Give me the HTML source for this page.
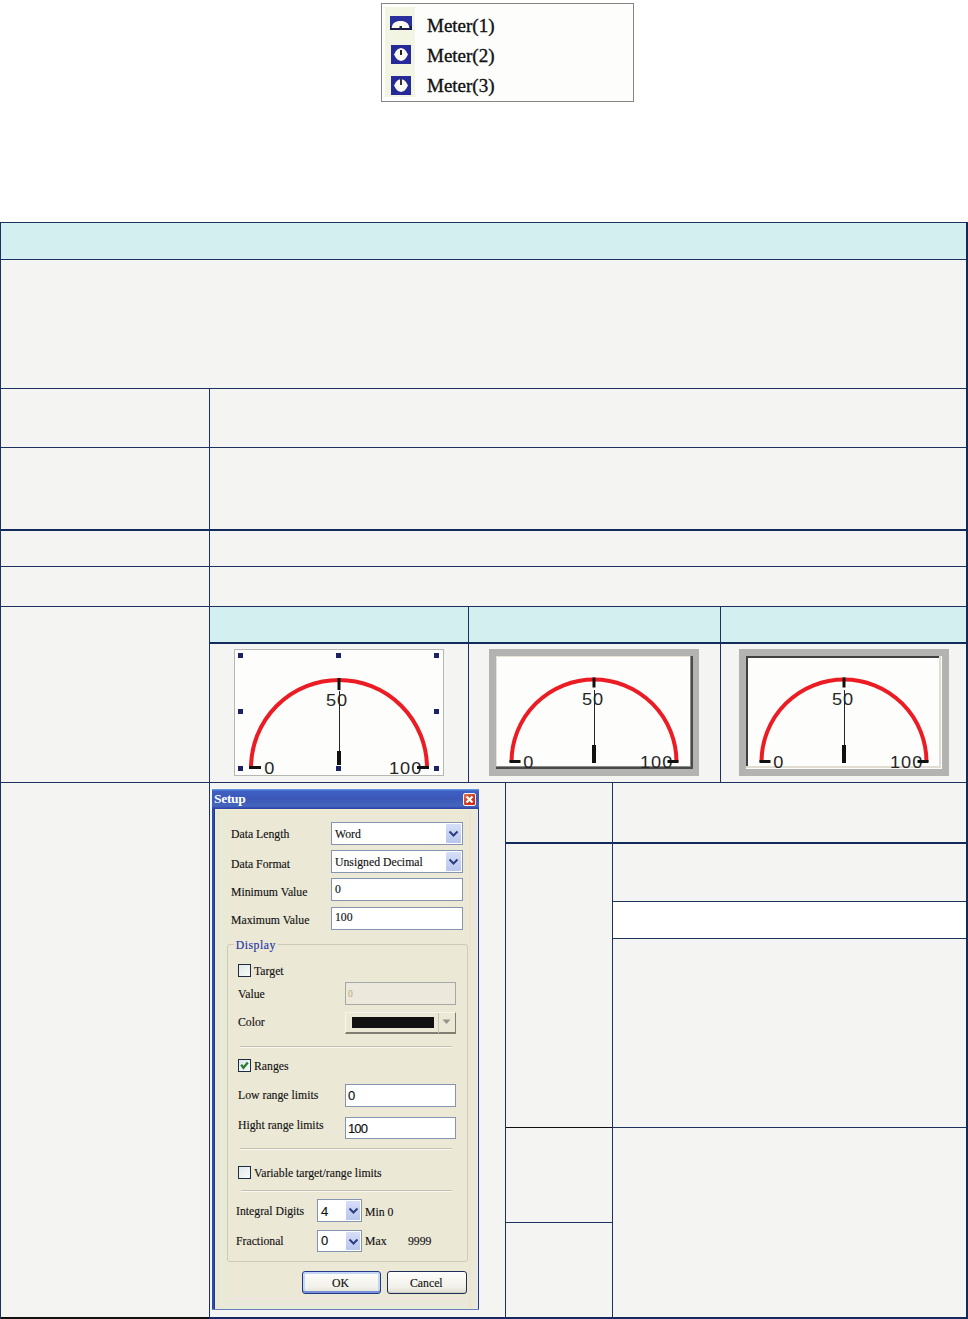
<!DOCTYPE html>
<html><head><meta charset="utf-8">
<style>
html,body{margin:0;padding:0;}
body{width:968px;height:1319px;background:#fff;position:relative;overflow:hidden;font-family:"Liberation Serif",serif;}
.a{position:absolute;}
.f{position:absolute;background:#f4f4f2;}
.h{position:absolute;background:#d3eff0;}
.L{position:absolute;background:#1d315e;}
.lbl{position:absolute;font-family:"Liberation Serif",serif;font-size:13.5px;color:#111;white-space:nowrap;line-height:12px;transform:scaleX(0.87);transform-origin:0 0;-webkit-text-stroke:0.15px currentColor;}
</style></head><body>

<!-- list box -->
<div class="a" style="left:381px;top:3px;width:251px;height:97px;border:1px solid #858583;background:#fdfdfc;"></div>
<div class="a" style="left:385px;top:7px;width:30px;height:90px;background:#f2f4e4;"></div>

<!-- table fills -->
<div class="f" style="left:0;top:222px;width:968px;height:1097px;"></div>
<div class="h" style="left:1px;top:223px;width:965px;height:36px;"></div>
<div class="h" style="left:210px;top:607px;width:756px;height:35px;"></div>
<div class="a" style="left:613px;top:902px;width:353px;height:36px;background:#fff;"></div>

<!-- horizontal lines -->
<div class="L" style="left:0;top:222px;width:968px;height:1px;"></div>
<div class="L" style="left:0;top:259px;width:968px;height:1px;"></div>
<div class="L" style="left:0;top:388px;width:968px;height:1px;"></div>
<div class="L" style="left:0;top:447px;width:968px;height:1px;"></div>
<div class="L" style="left:0;top:529px;width:968px;height:2px;background:#122a5c;"></div>
<div class="L" style="left:0;top:566px;width:968px;height:1px;"></div>
<div class="L" style="left:0;top:606px;width:968px;height:1px;"></div>
<div class="L" style="left:209px;top:642px;width:759px;height:2px;background:#122a5c;"></div>
<div class="L" style="left:0;top:782px;width:968px;height:1px;"></div>
<div class="L" style="left:505px;top:842px;width:463px;height:2px;background:#122a5c;"></div>
<div class="L" style="left:612px;top:901px;width:356px;height:1px;"></div>
<div class="L" style="left:612px;top:938px;width:356px;height:1px;"></div>
<div class="L" style="left:505px;top:1127px;width:107px;height:1px;background:#111;"></div>
<div class="L" style="left:612px;top:1127px;width:356px;height:1px;"></div>
<div class="L" style="left:505px;top:1222px;width:107px;height:1px;"></div>
<div class="L" style="left:0;top:1317px;width:209px;height:2px;background:#111;"></div>
<div class="L" style="left:209px;top:1317px;width:759px;height:2px;background:#122a5c;"></div>

<!-- vertical lines -->
<div class="L" style="left:0;top:222px;width:1px;height:1097px;"></div>
<div class="L" style="left:966px;top:222px;width:2px;height:1097px;background:#14285a;"></div>
<div class="L" style="left:209px;top:388px;width:1px;height:931px;"></div>
<div class="L" style="left:468px;top:606px;width:1px;height:176px;"></div>
<div class="L" style="left:720px;top:606px;width:1px;height:176px;"></div>
<div class="L" style="left:505px;top:782px;width:1px;height:537px;"></div>
<div class="L" style="left:612px;top:782px;width:1px;height:537px;"></div>


<!-- list icons -->
<svg class="a" style="left:389px;top:15px;" width="24" height="82" viewBox="0 0 24 82">
  <rect x="1" y="1" width="22" height="14" fill="#2a2f9e"/>
  <rect x="1" y="11" width="22" height="4" fill="#1a1a50"/>
  <path d="M2.5 13 C3.5 8 6 6 11.5 6 C17 6 19.5 8 20.5 13 Z" fill="#fbfbf6"/>
  <rect x="10.5" y="11" width="2.5" height="3" fill="#183030"/>
  <rect x="2" y="30" width="20" height="19" fill="#262a98"/>
  <path d="M12 33 L15 34 L17 36 L19 39.5 L17 43 L15 45 L12 46 L9 45 L7 43 L5 39.5 L7 36 L9 34 Z" fill="#fbfbf6"/>
  <rect x="11" y="35" width="2" height="5" fill="#222"/>
  <rect x="2" y="61" width="20" height="19" fill="#262a98"/>
  <path d="M12 64 L15 65 L17 67 L19 70.5 L17 74 L15 76 L12 77 L9 76 L7 74 L5 70.5 L7 67 L9 65 Z" fill="#fbfbf6"/>
  <rect x="11" y="64" width="2" height="6" fill="#333"/>
</svg>
<div class="a" style="left:427px;top:16px;font-size:19px;line-height:19px;color:#111;white-space:nowrap;-webkit-text-stroke:0.35px #111;">Meter(1)</div>
<div class="a" style="left:427px;top:46px;font-size:19px;line-height:19px;color:#111;white-space:nowrap;-webkit-text-stroke:0.35px #111;">Meter(2)</div>
<div class="a" style="left:427px;top:76px;font-size:19px;line-height:19px;color:#111;white-space:nowrap;-webkit-text-stroke:0.35px #111;">Meter(3)</div>

<!-- meters -->
<svg class="a" style="left:0;top:0;" width="968" height="1319" viewBox="0 0 968 1319">
  <!-- meter 1 -->
  <rect x="234" y="649" width="210" height="127" fill="#b6b6b4"/>
  <rect x="235" y="650" width="208" height="125" fill="#fdfdfb"/>
  <g style="font-family:'Liberation Sans',sans-serif;font-size:17px;letter-spacing:0.9px;" fill="#262626">
  <text transform="translate(264.3 774.0) scale(1.07 1)">0</text>
  <text transform="translate(326.0 706.0) scale(1.07 1)">50</text>
  <text transform="translate(389.0 774.0) scale(1.07 1)">100</text>
  </g>
  <path d="M251 768 A88 88 0 0 1 427 768" fill="none" stroke="#ec1c24" stroke-width="4"/>
  <rect x="249" y="766" width="12" height="3" fill="#111"/>
  <rect x="417" y="766" width="12" height="3" fill="#111"/>
  <rect x="337.5" y="678" width="3" height="12" fill="#111"/>
  <rect x="339" y="691" width="1" height="61" fill="#262626"/>
  <rect x="337" y="751" width="4" height="14" fill="#111"/>
  <g fill="#1c2266">
   <rect x="238" y="653" width="5" height="5"/><rect x="336" y="653" width="5" height="5"/><rect x="434" y="653" width="5" height="5"/>
   <rect x="238" y="709" width="5" height="5"/><rect x="434" y="709" width="5" height="5"/>
   <rect x="238" y="766" width="5" height="5"/><rect x="336" y="766" width="5" height="5"/><rect x="434" y="766" width="5" height="5"/>
  </g>
  <!-- meter 2 -->
  <rect x="489" y="649" width="210" height="127" fill="#b3b3b1"/>
  <rect x="496" y="656" width="197" height="113" fill="#4a4a4a"/>
  <rect x="496" y="656" width="195" height="111" fill="#8c8c8c"/>
  <rect x="496" y="656" width="194" height="110" fill="#e6e2d6"/>
  <rect x="497" y="657" width="193" height="109" fill="#fdfdfb"/>
  <g style="font-family:'Liberation Sans',sans-serif;font-size:17px;letter-spacing:0.9px;" fill="#262626">
  <text transform="translate(523.3 768.0) scale(1.07 1)">0</text>
  <text transform="translate(582.0 705.0) scale(1.07 1)">50</text>
  <text transform="translate(640.0 768.0) scale(1.07 1)">100</text>
  </g>
  <path d="M511.5 762 A82.5 82.5 0 0 1 676.5 762" fill="none" stroke="#ec1c24" stroke-width="4"/>
  <rect x="509.5" y="760" width="11" height="3" fill="#111"/>
  <rect x="667.5" y="760" width="11" height="3" fill="#111"/>
  <rect x="592.5" y="677.5" width="3" height="10" fill="#111"/>
  <rect x="594" y="690" width="1" height="56" fill="#262626"/>
  <rect x="592" y="745" width="4" height="18" fill="#111"/>
  <!-- meter 3 -->
  <rect x="739" y="649" width="210" height="127" fill="#b3b3b1"/>
  <rect x="746" y="656" width="196" height="113" fill="#fbfbf8"/>
  <rect x="746" y="656" width="195" height="112" fill="#e0dcd2"/>
  <rect x="746" y="656" width="193" height="110" fill="#404040"/>
  <rect x="748" y="658" width="191" height="108" fill="#fdfdfb"/>
  <g style="font-family:'Liberation Sans',sans-serif;font-size:17px;letter-spacing:0.9px;" fill="#262626">
  <text transform="translate(773.3 768.0) scale(1.07 1)">0</text>
  <text transform="translate(832.0 705.0) scale(1.07 1)">50</text>
  <text transform="translate(890.0 768.0) scale(1.07 1)">100</text>
  </g>
  <path d="M761.5 762 A82.5 82.5 0 0 1 926.5 762" fill="none" stroke="#ec1c24" stroke-width="4"/>
  <rect x="759.5" y="760" width="11" height="3" fill="#111"/>
  <rect x="917.5" y="760" width="11" height="3" fill="#111"/>
  <rect x="842.5" y="677.5" width="3" height="10" fill="#111"/>
  <rect x="844" y="690" width="1" height="56" fill="#262626"/>
  <rect x="842" y="745" width="4" height="18" fill="#111"/>
</svg>

<!-- setup dialog -->
<div class="a" style="left:212px;top:789px;width:267px;height:521px;background:#26377a;"></div>
<div class="a" style="left:212px;top:789px;width:2px;height:521px;background:#3048b0;"></div>
<div class="a" style="left:212px;top:1309px;width:267px;height:1px;background:#6a7cc0;"></div>
<div class="a" style="left:212px;top:789px;width:267px;height:20px;background:linear-gradient(#6aa8e8 0px,#3e5fc4 2px,#3b58b8 10px,#4566bc 17px,#2a3cac 20px);"></div>
<div class="a" style="left:215px;top:809px;width:263px;height:500px;background:#ebe8d6;"></div>
<div class="a" style="left:477px;top:809px;width:1px;height:500px;background:#d8f0f8;"></div>
<div class="a" style="left:215px;top:809px;width:261px;height:1px;background:#f6eecb;"></div>
<div class="a" style="left:215px;top:810px;width:12px;height:498px;background:linear-gradient(90deg,#d6eef2 0,#d6eef2 1px,#e3ecd2 1px,#e3ecd2 3px,#efe5cd 3px,#efe5cd 5px,#eee7e0 5px,#eee7e0 7px,#e3ecd4 7px,#e3ecd4 9px,#e9ead6 9px);"></div>
<div class="a" style="left:468px;top:810px;width:10px;height:498px;background:linear-gradient(90deg,#e4ecd4 0,#e4ecd4 1px,#f0e2d2 1px,#f0e2d2 3px,#e4ecd2 3px,#e4ecd2 5px,#f0e4e4 5px,#f0e4e4 7px,#ece6d6 7px,#ece6d6 9px,#d8f0f8 9px);"></div>
<div class="a" style="left:227px;top:1296px;width:241px;height:13px;background:linear-gradient(180deg,#ebe8d6 0,#ebe8d6 2px,#f0e2e0 2px,#f0e2e0 4px,#e4ecd6 4px,#e4ecd6 7px,#f0e4e2 7px,#f0e4e2 9px,#e6ecd8 9px);"></div>

<div class="a" style="left:214px;top:793px;font-family:'Liberation Serif',serif;font-weight:bold;font-size:13.5px;line-height:12px;color:#fff;letter-spacing:-0.3px;">Setup</div>
<!-- close btn -->
<div class="a" style="left:463px;top:793px;width:11px;height:11px;border:1px solid #f4f4f4;border-radius:2px;background:linear-gradient(135deg,#e0704a,#c83820 60%,#d82010);"></div>
<svg class="a" style="left:463px;top:793px;" width="13" height="13" viewBox="0 0 13 13"><path d="M3.5 3.5 L9.5 9.5 M9.5 3.5 L3.5 9.5" stroke="#fff" stroke-width="2.2"/></svg>

<div class="lbl" style="left:231px;top:828px;">Data Length</div>
<div class="lbl" style="left:231px;top:858px;">Data Format</div>
<div class="lbl" style="left:231px;top:886px;">Minimum Value</div>
<div class="lbl" style="left:231px;top:914px;">Maximum Value</div>

<div class="a" style="left:331px;top:822px;width:130px;height:21px;border:1px solid #8594b0;background:#fff;"></div>
<div class="a" style="left:446px;top:824px;width:15px;height:19px;background:linear-gradient(#d6dff7,#b8c6ee);border-radius:1px;"></div>
<div class="lbl" style="left:335px;top:828px;">Word</div>
<div class="a" style="left:331px;top:850px;width:130px;height:21px;border:1px solid #8594b0;background:#fff;"></div>
<div class="a" style="left:446px;top:852px;width:15px;height:19px;background:linear-gradient(#d6dff7,#b8c6ee);border-radius:1px;"></div>
<div class="lbl" style="left:335px;top:856px;">Unsigned Decimal</div>
<div class="a" style="left:331px;top:878px;width:130px;height:21px;border:1px solid #8594b0;background:#fff;"></div>
<div class="lbl" style="left:335px;top:883px;">0</div>
<div class="a" style="left:331px;top:907px;width:130px;height:21px;border:1px solid #8594b0;background:#fff;"></div>
<div class="lbl" style="left:335px;top:911px;">100</div>

<!-- group box -->
<div class="a" style="left:227px;top:944px;width:239px;height:316px;border:1px solid #cdcab6;border-radius:3px;"></div>
<div class="lbl" style="left:234px;top:939px;padding:0 2px;background:#ebe8d6;color:#2232a8;letter-spacing:0.6px;">Display</div>

<div class="a" style="left:238px;top:964px;width:11px;height:11px;border:1px solid #1e2c40;background:linear-gradient(135deg,#e2e8ea,#f6fbf8);"></div>
<div class="lbl" style="left:254px;top:965px;">Target</div>
<div class="lbl" style="left:238px;top:988px;">Value</div>
<div class="a" style="left:345px;top:982px;width:109px;height:21px;border:1px solid #a6a8a6;background:#ece9dc;"></div>
<div class="lbl" style="left:348px;top:987px;color:#b8b28a;font-size:11px;">0</div>
<div class="lbl" style="left:238px;top:1016px;">Color</div>
<div class="a" style="left:345px;top:1012px;width:109px;height:19px;border-right:1px solid #807e70;border-bottom:2px solid #807e70;border-left:1px solid #f8f6ec;border-top:1px solid #f8f6ec;background:#ebe8d6;"></div>
<div class="a" style="left:352px;top:1017px;width:82px;height:11px;background:#111;"></div>
<div class="a" style="left:438px;top:1013px;width:1px;height:20px;background:#c8c5b6;"></div>
<svg class="a" style="left:442px;top:1019px;" width="9" height="6" viewBox="0 0 9 6"><path d="M0.5 0.5 L8.5 0.5 L4.5 5 Z" fill="#96948a"/></svg>
<div class="a" style="left:240px;top:1046px;width:212px;height:1px;background:#c4c1b1;"></div>
<div class="a" style="left:240px;top:1047px;width:212px;height:1px;background:#faf8f0;"></div>

<div class="a" style="left:238px;top:1059px;width:11px;height:11px;border:1px solid #1e2c40;background:linear-gradient(135deg,#e2e8ea,#f6fbf8);"></div>
<svg class="a" style="left:239px;top:1060px;" width="11" height="11" viewBox="0 0 11 11"><path d="M2.2 4.6 L4.4 7.8 L8.8 2.4" fill="none" stroke="#2a7a36" stroke-width="2.3"/></svg>
<div class="lbl" style="left:254px;top:1060px;">Ranges</div>
<div class="lbl" style="left:238px;top:1089px;">Low range limits</div>
<div class="a" style="left:345px;top:1084px;width:109px;height:21px;border:1px solid #8594b0;background:#fff;"></div>
<div class="lbl" style="left:348px;top:1090px;font-family:'Liberation Sans',sans-serif;font-size:13px;transform:none;">0</div>
<div class="lbl" style="left:238px;top:1119px;">Hight range limits</div>
<div class="a" style="left:345px;top:1117px;width:109px;height:20px;border:1px solid #8594b0;background:#fff;"></div>
<div class="lbl" style="left:348px;top:1123px;font-family:'Liberation Sans',sans-serif;font-size:13px;letter-spacing:-0.9px;transform:none;">100</div>
<div class="a" style="left:240px;top:1148px;width:212px;height:1px;background:#c4c1b1;"></div>
<div class="a" style="left:240px;top:1149px;width:212px;height:1px;background:#faf8f0;"></div>

<div class="a" style="left:238px;top:1166px;width:11px;height:11px;border:1px solid #1e2c40;background:linear-gradient(135deg,#e2e8ea,#f6fbf8);"></div>
<div class="lbl" style="left:254px;top:1167px;">Variable target/range limits</div>
<div class="a" style="left:241px;top:1190px;width:211px;height:1px;background:#c4c1b1;"></div>
<div class="a" style="left:241px;top:1191px;width:211px;height:1px;background:#faf8f0;"></div>

<div class="lbl" style="left:236px;top:1205px;">Integral Digits</div>
<div class="a" style="left:317px;top:1199px;width:43px;height:21px;border:1px solid #8594b0;background:#fff;"></div>
<div class="a" style="left:346px;top:1201px;width:14px;height:19px;background:linear-gradient(#d6dff7,#b8c6ee);"></div>
<div class="lbl" style="left:321px;top:1206px;font-family:'Liberation Sans',sans-serif;font-size:13px;transform:none;">4</div>
<div class="lbl" style="left:365px;top:1206px;">Min 0</div>
<div class="lbl" style="left:236px;top:1235px;">Fractional</div>
<div class="a" style="left:317px;top:1230px;width:43px;height:20px;border:1px solid #8594b0;background:#fff;"></div>
<div class="a" style="left:346px;top:1232px;width:14px;height:18px;background:linear-gradient(#d6dff7,#b8c6ee);"></div>
<div class="lbl" style="left:321px;top:1235px;font-family:'Liberation Sans',sans-serif;font-size:13px;transform:none;">0</div>
<div class="lbl" style="left:365px;top:1235px;">Max</div>
<div class="lbl" style="left:408px;top:1235px;">9999</div>

<div class="a" style="left:302px;top:1271px;width:77px;height:21px;border:1px solid #22388a;border-radius:3px;background:linear-gradient(#fdfdfb,#f2f1ea 70%,#e2e0d6);box-shadow:inset 0 -2px 0 #7890d8,inset 0 0 0 2px #c4d6f6;"></div>
<div class="lbl" style="left:332px;top:1277px;">OK</div>
<div class="a" style="left:387px;top:1271px;width:78px;height:21px;border:1px solid #1e2e58;border-radius:3px;background:linear-gradient(#fdfdfb,#f2f1ea 70%,#dedcd2);box-shadow:inset 0 -1px 0 #d0cec4;"></div>
<div class="lbl" style="left:410px;top:1277px;">Cancel</div>
<svg class="a" style="left:446px;top:824px;" width="15" height="19" viewBox="0 0 15 19"><path d="M3.5 7.5 L7.5 11.5 L11.5 7.5" fill="none" stroke="#2c3e80" stroke-width="2"/></svg>
<svg class="a" style="left:446px;top:852px;" width="15" height="19" viewBox="0 0 15 19"><path d="M3.5 7.5 L7.5 11.5 L11.5 7.5" fill="none" stroke="#2c3e80" stroke-width="2"/></svg>
<svg class="a" style="left:346px;top:1201px;" width="15" height="19" viewBox="0 0 15 19"><path d="M3.5 7.5 L7.5 11.5 L11.5 7.5" fill="none" stroke="#2c3e80" stroke-width="2"/></svg>
<svg class="a" style="left:346px;top:1232px;" width="15" height="19" viewBox="0 0 15 19"><path d="M3.5 7.5 L7.5 11.5 L11.5 7.5" fill="none" stroke="#2c3e80" stroke-width="2"/></svg>

</body></html>
